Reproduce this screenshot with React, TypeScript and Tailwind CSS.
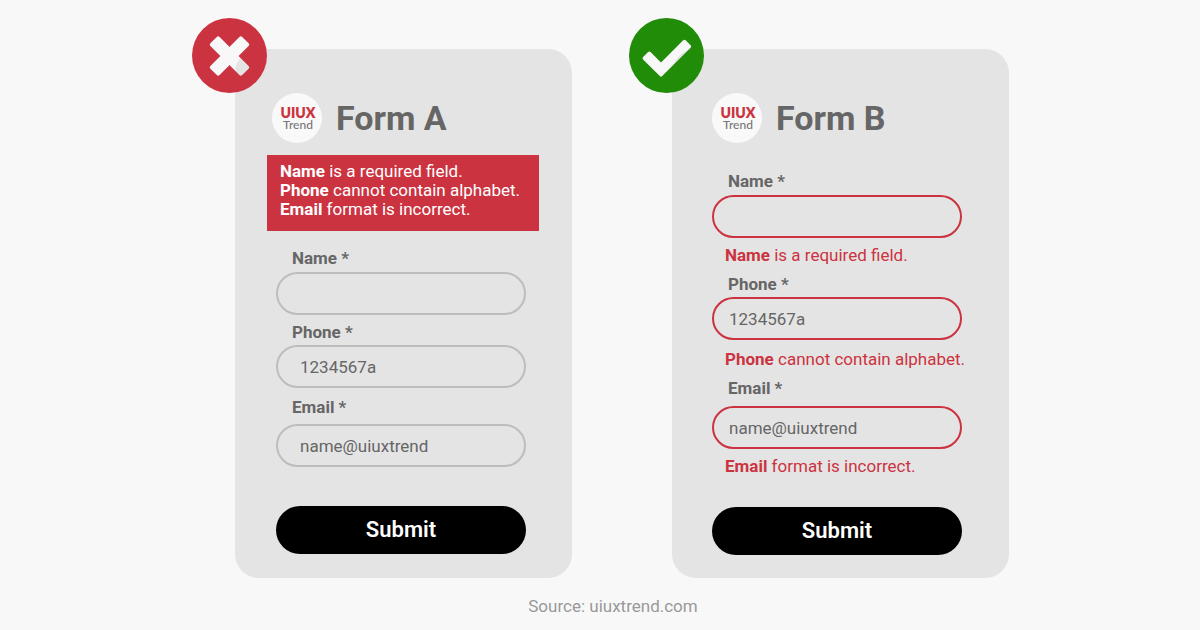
import type { ReactNode } from "react";

type FieldProps = {
  id: string;
  label: string;
  type?: string;
  value?: string;
  error?: ReactNode;
  className?: string;
  gap?: string;
};

function Logo() {
  return (
    <div className="flex size-[50px] shrink-0 flex-col items-center justify-center rounded-full bg-[#f9f9f9] pt-[2px] pl-[2px] font-['Lato',sans-serif]">
      <span className="text-[14px] leading-[12px] font-extrabold text-[#cc3340]">UIUX</span>
      <span className="text-[12px] leading-[12px] font-medium text-[#777]">Trend</span>
    </div>
  );
}

function CrossBadge() {
  return (
    <svg viewBox="0 0 75 75" className="absolute -top-[31px] -left-[43px] size-[75px]" role="img" aria-label="Bad example">
      <mask id="cross-cut">
        <rect width="75" height="75" fill="#fff" />
        <g transform="rotate(45 37.5 38)" fill="#000">
          <rect x="15" y="31.5" width="45" height="13" rx="2" />
          <rect x="31" y="15.5" width="13" height="45" rx="2" />
        </g>
      </mask>
      <circle cx="37.5" cy="37.5" r="37.5" fill="#cc3340" mask="url(#cross-cut)" />
    </svg>
  );
}

function CheckBadge() {
  return (
    <svg viewBox="0 0 75 75" className="absolute -top-[31px] -left-[43px] size-[75px]" role="img" aria-label="Good example">
      <mask id="check-cut">
        <rect width="75" height="75" fill="#fff" />
        <path
          d="M15.3 40.2 L20.3 35.2 L32 46.9 L55.4 23.5 L60.4 28.5 L32 56.9 Z"
          fill="#000"
          stroke="#000"
          strokeWidth="3.4"
          strokeLinejoin="round"
        />
      </mask>
      <circle cx="37.5" cy="37.5" r="37.5" fill="#218c08" mask="url(#check-cut)" />
    </svg>
  );
}

function Field({ id, label, type = "text", value, error, className = "", gap = "mt-[3px]" }: FieldProps) {
  const tone = error !== undefined ? "border-[#cc3340] pl-[15px]" : "border-[#bdbdbd] pl-[22px]";
  return (
    <div className={`flex flex-col ${className}`}>
      <label htmlFor={id} className="pl-4 text-[17px] leading-[20px] font-bold">
        {label} *
      </label>
      <input
        id={id}
        type={type}
        defaultValue={value}
        className={`${gap} h-[43px] w-full rounded-full border-2 bg-transparent pr-4 text-[17px] text-[#666] outline-none ${tone}`}
      />
      {error}
    </div>
  );
}

function FieldError({ name, children, className = "mt-[7px]" }: { name: string; children: ReactNode; className?: string }) {
  return (
    <p className={`${className} pl-[13px] text-[17px] leading-[20px] whitespace-nowrap text-[#cc3340]`}>
      <b>{name}</b> {children}
    </p>
  );
}

function SubmitButton({ className }: { className: string }) {
  return (
    <button type="button" className={`h-12 w-full rounded-full bg-black pb-[2px] text-[22px] font-semibold text-white ${className}`}>
      Submit
    </button>
  );
}

function FormA() {
  return (
    <form className="relative flex flex-col rounded-3xl bg-[#e4e4e4] pt-11 pr-[46px] pb-6 pl-[41px]">
      <CrossBadge />
      <header className="-ml-1 flex items-center gap-[14px]">
        <Logo />
        <h2 className="text-[34px] leading-[50px] font-bold">Form A</h2>
      </header>
      <div role="alert" className="mt-3 -mr-[13px] -ml-[9px] bg-[#cc3340] px-[13px] pt-[7px] pb-3 text-[17px] leading-[19px] whitespace-nowrap text-white">
        <p><b>Name</b> is a required field.</p>
        <p><b>Phone</b> cannot contain alphabet.</p>
        <p><b>Email</b> format is incorrect.</p>
      </div>
      <Field id="a-name" label="Name" className="mt-[17px]" gap="mt-1" />
      <Field id="a-phone" label="Phone" value="1234567a" className="mt-[7px]" />
      <Field id="a-email" label="Email" value="name@uiuxtrend" className="mt-[9px]" gap="mt-[7px]" />
      <SubmitButton className="mt-[39px]" />
    </form>
  );
}

function FormB() {
  return (
    <form className="relative flex flex-col rounded-3xl bg-[#e4e4e4] pt-11 pr-[47px] pb-[23px] pl-10">
      <CheckBadge />
      <header className="flex items-center gap-[14px]">
        <Logo />
        <h2 className="text-[34px] leading-[50px] font-bold">Form B</h2>
      </header>
      <Field
        id="b-name"
        label="Name"
        className="mt-7"
        gap="mt-1"
        error={<FieldError name="Name">is a required field.</FieldError>}
      />
      <Field
        id="b-phone"
        label="Phone"
        value="1234567a"
        className="mt-[9px]"
        error={<FieldError name="Phone" className="mt-[9px]">cannot contain alphabet.</FieldError>}
      />
      <Field
        id="b-email"
        label="Email"
        value="name@uiuxtrend"
        className="mt-[9px]"
        gap="mt-2"
        error={<FieldError name="Email">format is incorrect.</FieldError>}
      />
      <SubmitButton className="mt-[31px]" />
    </form>
  );
}

export default function App() {
  return (
    <main className="flex min-h-screen flex-col items-center bg-[#f8f8f8] pt-[49px] font-['Roboto',sans-serif] text-[#666]">
      <div className="w-full max-w-[818px] pl-11">
        <div className="grid grid-cols-2 gap-[100px]">
          <FormA />
          <FormB />
        </div>
      </div>
      <p className="mt-[18px] pl-[26px] text-[17px] leading-[20px] text-[#999]">Source: uiuxtrend.com</p>
    </main>
  );
}
